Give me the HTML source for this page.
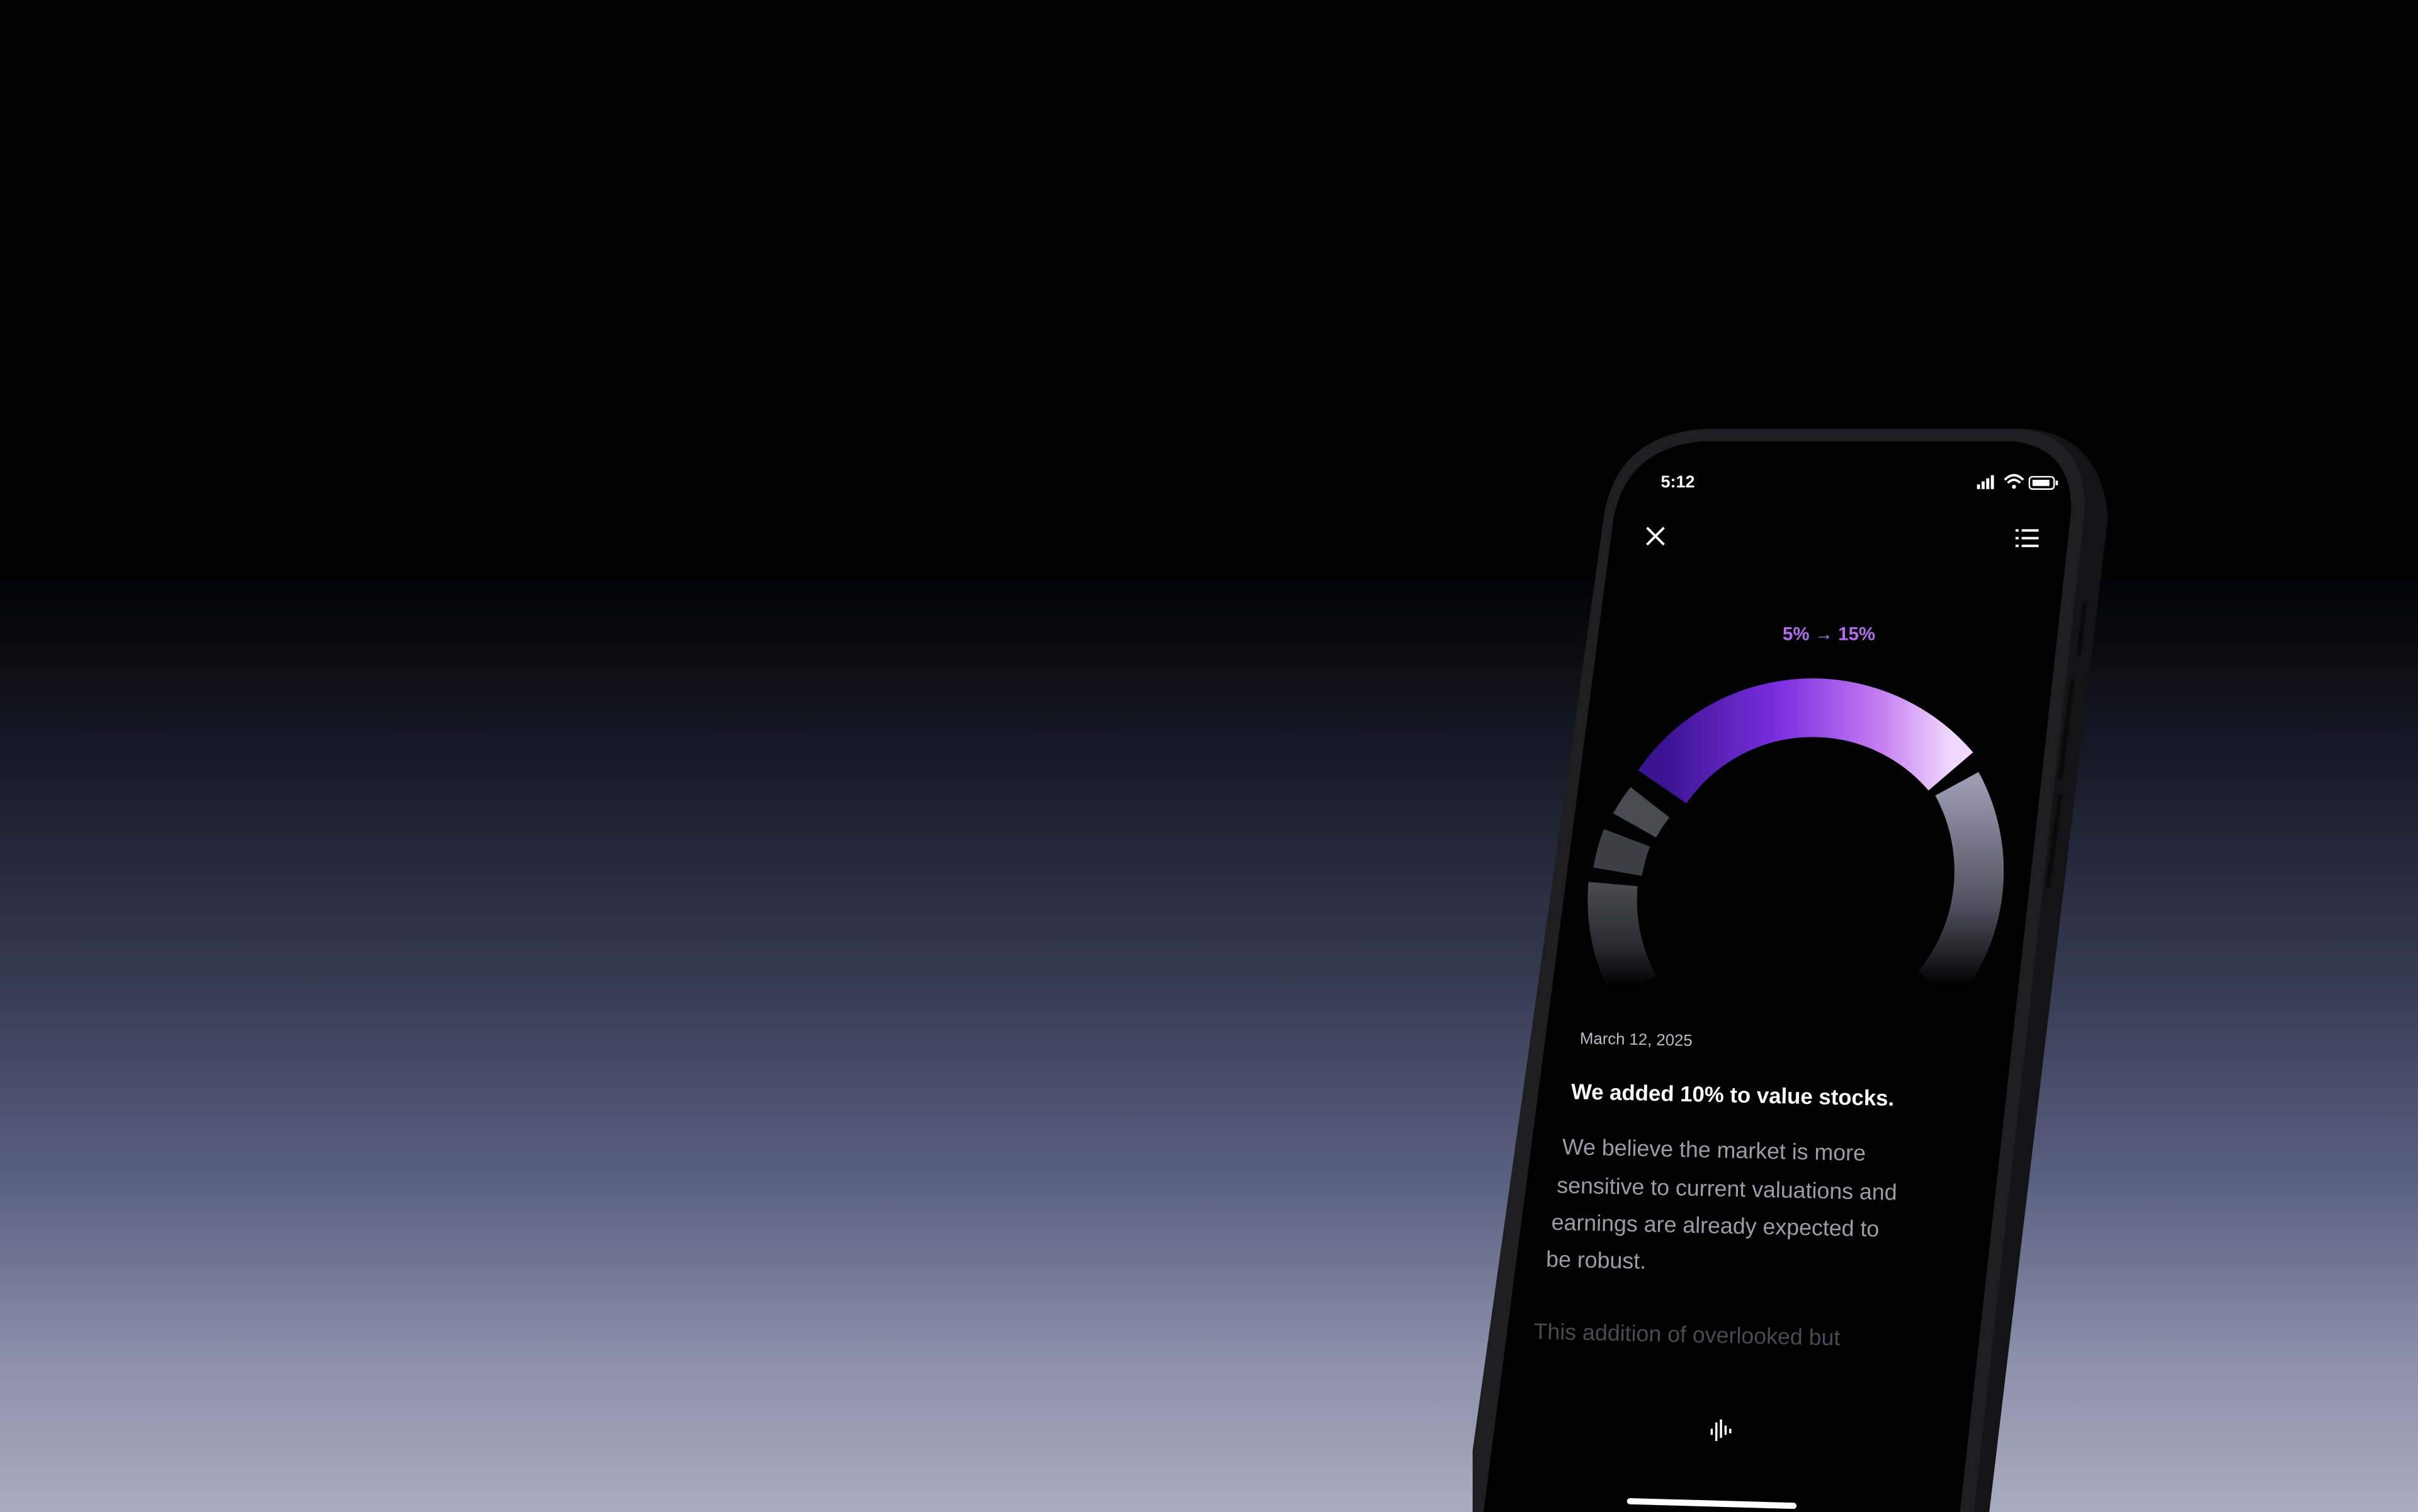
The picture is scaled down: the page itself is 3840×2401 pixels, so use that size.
<!DOCTYPE html>
<html><head><meta charset="utf-8"><style>
html,body{margin:0;padding:0;width:3840px;height:2401px;overflow:hidden;background:#000}
svg{display:block}
text{font-family:"Liberation Sans",sans-serif}
</style></head><body>
<svg width="3840" height="2401" viewBox="0 0 1568 980" preserveAspectRatio="none">
<defs>
<linearGradient id="bg" x1="0" y1="0" x2="0" y2="1">
<stop offset="0" stop-color="#000"/>
<stop offset="0.37" stop-color="#000"/>
<stop offset="0.5" stop-color="#161a26"/>
<stop offset="0.65" stop-color="#363b52"/>
<stop offset="0.78" stop-color="#5a6080"/>
<stop offset="0.9" stop-color="#8c90a9"/>
<stop offset="1" stop-color="#a9acc0"/>
</linearGradient>
<linearGradient id="pur" x1="0" y1="0" x2="1" y2="0">
<stop offset="0" stop-color="#3a1490"/>
<stop offset="0.4" stop-color="#7a2ee0"/>
<stop offset="0.75" stop-color="#c47cf0"/>
<stop offset="1" stop-color="#f0d8ff"/>
</linearGradient>
<linearGradient id="gr" x1="0" y1="0" x2="0" y2="1">
<stop offset="0" stop-color="#9a9ab0"/>
<stop offset="0.6" stop-color="#50505e"/>
<stop offset="1" stop-color="#000"/>
</linearGradient>
<linearGradient id="gl" x1="0" y1="0" x2="0" y2="1">
<stop offset="0" stop-color="#4a4a52"/>
<stop offset="0.6" stop-color="#2a2a30"/>
<stop offset="1" stop-color="#000"/>
</linearGradient>
</defs>
<rect width="1568" height="980" fill="url(#bg)"/>
<path d="M1040,335 Q1048,282 1105,278 L1315,278 Q1362,282 1367,335 L1290,980 L955,980 L955,940 Z" fill="#141416"/>
<path d="M1040,335 Q1048,282 1105,278 L1310,278 Q1352,282 1352,330 L1280,980 L955,980 L955,940 Z" fill="#1e1e20"/>
<path d="M1046,338 Q1054,290 1105,286 L1305,286 Q1344,290 1343,332 L1271,980 L962,980 Z" fill="#000"/>
<path d="M1352,390 L1348,425" stroke="#0a0a0a" stroke-width="3"/>
<path d="M1344,440 L1336,505" stroke="#0a0a0a" stroke-width="3"/>
<path d="M1336,515 L1328,575" stroke="#0a0a0a" stroke-width="3"/>
<text x="1077" y="316" font-size="11" fill="#fff" font-weight="bold">5:12</text>
<rect x="1282" y="314" width="2" height="3" fill="#fff"/><rect x="1285" y="312" width="2" height="5" fill="#fff"/><rect x="1288" y="310" width="2" height="7" fill="#fff"/><rect x="1291" y="308" width="2" height="9" fill="#fff"/>
<path d="M1300,311 Q1306,305 1312,311 M1302,313 Q1306,309 1310,313" stroke="#fff" stroke-width="1.5" fill="none"/><circle cx="1306" cy="315.5" r="1.3" fill="#fff"/>
<rect x="1316" y="309" width="16" height="8" rx="2" fill="none" stroke="#fff" stroke-width="1"/><rect x="1318" y="311" width="11" height="4" fill="#fff"/><rect x="1333" y="311.5" width="1.5" height="3" fill="#fff"/>
<path d="M1068,342 L1079,353 M1079,342 L1068,353" stroke="#fff" stroke-width="1.6"/>
<g fill="#fff"><rect x="1307" y="343" width="2" height="1.6"/><rect x="1311" y="343" width="11" height="1.6"/><rect x="1307" y="348" width="2" height="1.6"/><rect x="1311" y="348" width="11" height="1.6"/><rect x="1307" y="353" width="2" height="1.6"/><rect x="1311" y="353" width="11" height="1.6"/></g>
<text x="1156" y="415" font-size="12" fill="#b36cf0" font-weight="bold">5% → 15%</text>
<g fill="none" stroke-width="38" transform="translate(0,-5)">
<path d="M1078,515 A118,118 0 0 1 1265,505" stroke="url(#pur)"/>
<path d="M1269,513 A118,118 0 0 1 1256,645" stroke="url(#gr)" stroke-width="32"/>
<path d="M1070,525 A118,118 0 0 0 1060,540" stroke="#4a4a52" stroke-width="32"/>
<path d="M1055,548 A118,118 0 0 0 1049,570" stroke="#3e3e46" stroke-width="32"/>
<path d="M1046,578 A118,118 0 0 0 1060,645" stroke="url(#gl)" stroke-width="32"/>
</g>
<g transform="rotate(1.2 1100 700)">
<text x="1024" y="678" font-size="10.5" fill="#bdbdc4">March 12, 2025</text>
<text x="1019" y="714" font-size="14.2" fill="#fff" font-weight="600">We added 10% to value stocks.</text>
<g font-size="14.6" fill="#9c9ca4">
<text x="1014" y="750">We believe the market is more</text>
<text x="1011" y="775">sensitive to current valuations and</text>
<text x="1008" y="799">earnings are already expected to</text>
<text x="1005" y="823">be robust.</text>
</g>
<text x="998" y="870" font-size="14.6" fill="#4a4a50">This addition of overlooked but</text>
</g>
<g stroke="#fff" stroke-width="1.4"><path d="M1110,926 L1110,930 M1113,922 L1113,934 M1116,920 L1116,932 M1119,924 L1119,930 M1122,926 L1122,929"/></g>
<path d="M1057,973 L1163,976" stroke="#fff" stroke-width="4" stroke-linecap="round"/>
</svg>
</body></html>
